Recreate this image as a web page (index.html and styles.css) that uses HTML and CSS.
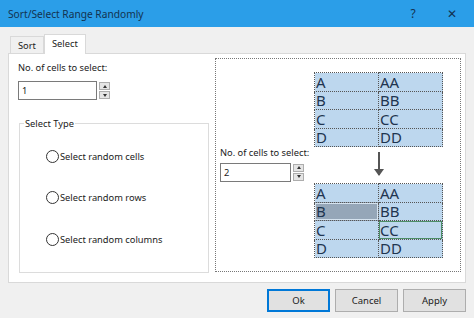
FILE: index.html
```html
<!DOCTYPE html>
<html>
<head>
<meta charset="utf-8">
<title>Sort/Select Range Randomly</title>
<link rel="stylesheet" href="styles.css">
</head>
<body>
<div class="window">
    <div class="titlebar">
        <span class="title">Sort/Select Range Randomly</span>
        <span class="help">?</span>
        <span class="close">&#x2715;</span>
    </div>

    <div class="tabs">
        <div class="tab">Sort</div>
        <div class="tab active">Select</div>
    </div>

    <div class="panel">
        <div class="left">
            <div class="label">No. of cells to select:</div>
            <div class="field">
                <div class="input">1</div>
                <div class="spin"><span class="up"></span><span class="down"></span></div>
            </div>

            <fieldset class="group">
                <legend>Select Type</legend>
                <div class="options">
                    <label class="radio"><span class="dot"></span>Select random cells</label>
                    <label class="radio"><span class="dot"></span>Select random rows</label>
                    <label class="radio"><span class="dot"></span>Select random columns</label>
                </div>
            </fieldset>
        </div>

        <div class="preview">
            <div class="side">
                <div class="label">No. of cells to select:</div>
                <div class="field">
                    <div class="input small">2</div>
                    <div class="spin"><span class="up"></span><span class="down"></span></div>
                </div>
            </div>
            <div class="tables">
                <table class="grid">
                    <tr><td>A</td><td>AA</td></tr>
                    <tr><td>B</td><td>BB</td></tr>
                    <tr><td>C</td><td>CC</td></tr>
                    <tr><td>D</td><td>DD</td></tr>
                </table>
                <div class="arrow"></div>
                <table class="grid">
                    <tr><td>A</td><td>AA</td></tr>
                    <tr><td class="picked">B</td><td>BB</td></tr>
                    <tr><td>C</td><td class="current">CC</td></tr>
                    <tr><td>D</td><td>DD</td></tr>
                </table>
            </div>
        </div>
    </div>

    <div class="buttons">
        <button class="btn default">Ok</button>
        <button class="btn">Cancel</button>
        <button class="btn">Apply</button>
    </div>
</div>
</body>
</html>
```

FILE: styles.css
```css
* {
    box-sizing: border-box;
}

body {
    margin: 0;
    font-family: "Noto Sans", "DejaVu Sans", sans-serif;
    font-size: 9.3px;
    color: #1a1a1a;
}

.window {
    width: 474px;
    height: 318px;
    background: #f0f0f0;
    display: flex;
    flex-direction: column;
    overflow: hidden;
}

.titlebar {
    height: 27px;
    background: #2b9ee8;
    display: flex;
    align-items: center;
    padding: 0 0 0 8px;
    color: #13324f;
}
.titlebar .title {
    flex: 1;
    font-size: 10.2px;
}
.titlebar .help {
    width: 34px;
    font-size: 12px;
    text-align: center;
}
.titlebar .close {
    width: 44px;
    font-size: 12px;
    text-align: center;
}

.tabs {
    display: flex;
    align-items: flex-end;
    height: 26px;
    padding-left: 10px;
}
.tab {
    height: 17px;
    padding: 0 7px;
    line-height: 17px;
    border: 1px solid #d9d9d9;
    border-bottom: 0;
    background: #f0f0f0;
}
.tab.active {
    height: 20px;
    padding: 0 7px;
    line-height: 18px;
    background: #fff;
    margin-bottom: -1px;
    position: relative;
    z-index: 1;
}

.panel {
    margin: 0 8px;
    height: 230px;
    background: #fff;
    border: 1px solid #d9d9d9;
    display: flex;
    padding: 4px 4px 10px 9px;
}

.left {
    width: 197px;
    padding-top: 2px;
}

.label {
    line-height: 15px;
    white-space: nowrap;
}

.field {
    display: flex;
    align-items: center;
    gap: 2px;
    margin-top: 6px;
}
.input {
    width: 79px;
    height: 19px;
    border: 1px solid #7a7a7a;
    padding: 0 3px;
    line-height: 17px;
    background: #fff;
}
.input.small {
    width: 71px;
}
.spin {
    width: 11px;
    height: 17px;
    display: flex;
    flex-direction: column;
    gap: 1px;
}
.spin span {
    flex: 1;
    border: 1px solid #adadad;
    background: #e5e5e5;
    display: flex;
    align-items: center;
    justify-content: center;
}
.spin span::after {
    content: "";
    border-left: 2px solid transparent;
    border-right: 2px solid transparent;
}
.spin .up::after {
    border-bottom: 3px solid #333;
}
.spin .down::after {
    border-top: 3px solid #333;
}

.group {
    margin: 17px 0 0 1px;
    width: 190px;
    height: 156px;
    border: 1px solid #dcdcdc;
    padding: 0;
}
.group legend {
    padding: 0 1px;
    margin-left: 4px;
}
.options {
    padding: 19px 0 0 26px;
}
.radio {
    display: flex;
    align-items: center;
    height: 14px;
    margin-bottom: 27.5px;
}
.radio .dot {
    width: 13px;
    height: 13px;
    border: 1px solid #333;
    border-radius: 50%;
    margin-right: 1px;
    background: #fff;
}

.preview {
    flex: 1;
    border: 1px dotted #777;
    display: flex;
    align-items: center;
    padding: 0 17px 0 4px;
}
.side {
    width: 94px;
    padding-bottom: 4px;
}
.side .field {
    margin-top: 3px;
}

.tables {
    display: flex;
    flex-direction: column;
    align-items: center;
}
.grid {
    border-collapse: collapse;
    font-size: 15px;
    color: #1f3550;
}
.grid td {
    width: 64px;
    height: 18.5px;
    padding: 0 0 0 1px;
    line-height: 16px;
    border: 1px dotted #555;
    background: #bdd7ee;
}
.grid td.picked {
    background: #95a6b8;
    box-shadow: inset 0 0 0 1px #d5e2ee;
}
.grid td.current {
    box-shadow: inset 0 0 0 1px #4e8f68;
}

.arrow {
    width: 2px;
    height: 23px;
    background: #555;
    margin: 5px 0 8px;
    position: relative;
}
.arrow::after {
    content: "";
    position: absolute;
    left: -4px;
    bottom: -1px;
    border-left: 5px solid transparent;
    border-right: 5px solid transparent;
    border-top: 7px solid #555;
}

.buttons {
    display: flex;
    justify-content: flex-end;
    gap: 5px;
    padding: 6px 8px 0 0;
}
.btn {
    width: 63px;
    height: 23px;
    border: 1px solid #adadad;
    background: #e1e1e1;
    font-family: inherit;
    font-size: 9.5px;
    color: #1a1a1a;
    padding: 0;
}
.btn.default {
    border: 2px solid #0078d7;
}
```
